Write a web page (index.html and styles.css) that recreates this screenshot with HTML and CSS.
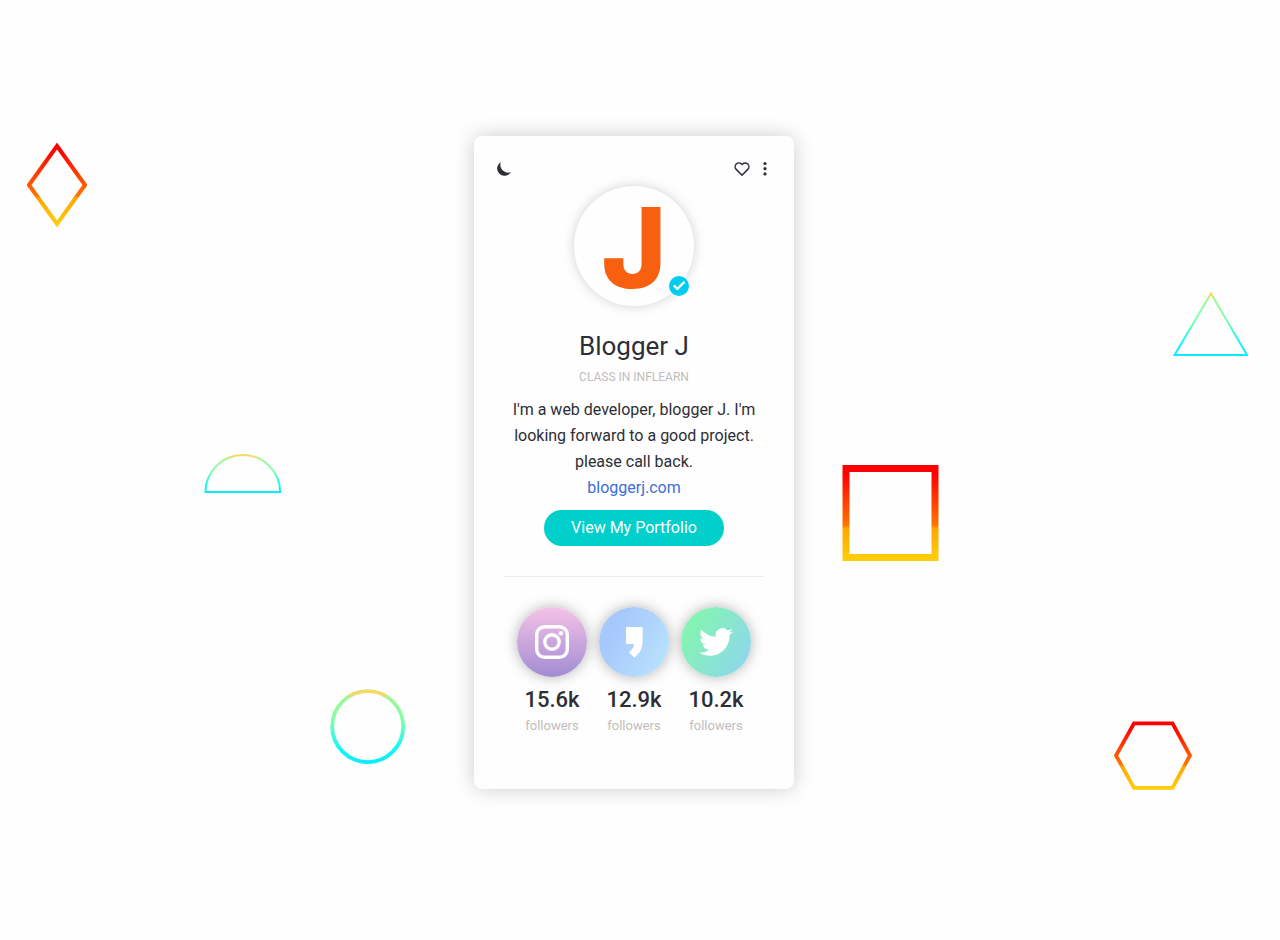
FILE: index.html
```html
<!DOCTYPE html>
<html lang="en">
<head>
<meta charset="utf-8">
<meta name="viewport" content="width=device-width, initial-scale=1">
<title>Blogger J</title>
<link rel="stylesheet" href="styles.css">
</head>
<body>
<svg class="defs" aria-hidden="true">
  <defs>
    <linearGradient id="warm" x1="0" y1="0" x2="0" y2="1">
      <stop offset="0.06" stop-color="#ff0000"/>
      <stop offset="0.64" stop-color="#ff7600"/>
      <stop offset="0.67" stop-color="#ffa600"/>
      <stop offset="1" stop-color="#ffcc0a"/>
    </linearGradient>
    <linearGradient id="cool" x1="0" y1="0" x2="0" y2="1">
      <stop offset="0" stop-color="#f0da68"/>
      <stop offset="0.06" stop-color="#f0da68"/>
      <stop offset="0.08" stop-color="#a0f890"/>
      <stop offset="0.42" stop-color="#80ffaa"/>
      <stop offset="0.8" stop-color="#10f8f8"/>
      <stop offset="1" stop-color="#08eef8"/>
    </linearGradient>
  </defs>
</svg>
<div class="page">
  <div class="shapes" aria-hidden="true">
    <svg class="shape diamond" width="60" height="84" viewBox="0 0 60 84"><path d="M30 3 58 42 30 81 2 42Z" fill="none" stroke="url(#warm)" stroke-width="4"/></svg>
    <svg class="shape triangle" width="76" height="64" viewBox="0 0 76 64"><path d="M39 1.500 75 63H2.500Z" fill="none" stroke="url(#cool)" stroke-width="2"/></svg>
    <svg class="shape half" width="78" height="40" viewBox="0 0 78 40"><path d="M1.500 38a37.300 37 0 0 1 74.600 0Z" fill="none" stroke="url(#cool)" stroke-width="1.900"/></svg>
    <svg class="shape square" width="97" height="96" viewBox="0 0 97 96"><path d="M4 3.500h89v89H4Z" fill="none" stroke="url(#warm)" stroke-width="7"/></svg>
    <svg class="shape ring" width="76" height="76" viewBox="0 0 76 76"><circle cx="37.700" cy="37.600" r="35.500" fill="none" stroke="url(#cool)" stroke-width="3.800"/></svg>
    <svg class="shape hexagon" width="78" height="70" viewBox="0 0 78 70"><path d="M20 3.300H58.500L76 35.500 58.500 67.800H20L2 35.500Z" fill="none" stroke="url(#warm)" stroke-width="3.800"/></svg>
  </div>
  <main class="card">
    <header class="toolbar">
      <button class="icon-button" type="button" aria-label="Dark mode">
        <svg width="18" height="18" viewBox="0 0 18 18"><path d="M7 2A7.300 7.300 0 1 0 16.800 12 7.600 7.600 0 0 1 7 2Z" fill="#2d2e36"/></svg>
      </button>
      <div class="tools">
        <button class="icon-button" type="button" aria-label="Like">
          <svg width="18" height="18" viewBox="0 0 24 24"><path d="M12 20.300 4.300 12.500A5 5 0 0 1 11.400 5.400L12 6l.6-.6a5 5 0 0 1 7.100 7.100Z" fill="none" stroke="#2d2e36" stroke-width="2"/></svg>
        </button>
        <button class="icon-button" type="button" aria-label="More">
          <svg width="18" height="18" viewBox="0 0 18 18" fill="#2d2e36"><circle cx="9" cy="3.500" r="1.600"/><circle cx="9" cy="8.700" r="1.600"/><circle cx="9" cy="13.900" r="1.600"/></svg>
        </button>
      </div>
    </header>
    <div class="avatar">
      <span class="letter">J</span>
      <svg class="verified" width="20" height="20" viewBox="0 0 20 20"><circle cx="10" cy="10" r="10" fill="#00ccee"/><path d="m4.800 9.400 3.500 3.500 7.200-7" fill="none" stroke="#fff" stroke-width="2.200"/></svg>
    </div>
    <h1 class="name">Blogger J</h1>
    <p class="role">CLASS IN INFLEARN</p>
    <p class="bio">I'm a web developer, blogger J. I'm looking forward to a good project. please call back.</p>
    <a class="site" href="#">bloggerj.com</a>
    <button class="portfolio" type="button">View My Portfolio</button>
    <ul class="socials">
      <li class="social">
        <a class="badge instagram" href="#" aria-label="Instagram"><svg width="36" height="36" viewBox="0 0 36 36" fill="none" stroke="#fff"><rect x="2.700" y="2.700" width="30.600" height="30.600" rx="8" stroke-width="3.400"/><circle cx="18" cy="18" r="7.200" stroke-width="3.400"/><circle cx="26.900" cy="9.200" r="2.200" fill="#fff" stroke="none"/></svg></a>
        <strong class="count">15.6k</strong>
        <span class="label">followers</span>
      </li>
      <li class="social">
        <a class="badge story" href="#" aria-label="Story"><svg width="36" height="36" viewBox="0 0 36 36"><path d="M11 3H25.500Q26.700 3 26.700 4.200V16C26.700 24 23.500 30 18.400 33.400L12.800 28.200C16 26 17.800 23.500 18 20H11Q10 20 10 19V4Q10 3 11 3Z" fill="#fff"/></svg></a>
        <strong class="count">12.9k</strong>
        <span class="label">followers</span>
      </li>
      <li class="social">
        <a class="badge twitter" href="#" aria-label="Twitter"><svg width="34" height="34" viewBox="0 0 24 24"><path d="M23.953 4.570a10 10 0 01-2.825.775 4.958 4.958 0 002.163-2.723c-.951.555-2.005.959-3.127 1.184a4.920 4.920 0 00-8.384 4.482C7.690 8.095 4.067 6.130 1.640 3.162a4.822 4.822 0 00-.666 2.475c0 1.710.870 3.213 2.188 4.096a4.904 4.904 0 01-2.228-.616v.060a4.923 4.923 0 003.946 4.827 4.996 4.996 0 01-2.212.085 4.936 4.936 0 004.604 3.417 9.867 9.867 0 01-6.102 2.105c-.390 0-.779-.023-1.170-.067a13.995 13.995 0 007.557 2.209c9.053 0 13.998-7.496 13.998-13.985 0-.210 0-.420-.015-.630A9.935 9.935 0 0024 4.590z" fill="#fff"/></svg></a>
        <strong class="count">10.2k</strong>
        <span class="label">followers</span>
      </li>
    </ul>
  </main>
</div>
</body>
</html>
```
FILE: styles.css
```css
* { box-sizing: border-box; }

body {
  margin: 0;
  background: #fefefe;
  color: #2d2e36;
  font-family: Roboto, sans-serif;
}

.defs { position: absolute; width: 0; height: 0; }

.page {
  position: relative;
  min-height: 100vh;
  padding: 0 12px 15px 0;
  display: grid;
  place-items: center;
  overflow: hidden;
}

.shapes { position: absolute; inset: 0; }
.shape { position: absolute; }
.diamond { left: 27px; top: 143px; }
.triangle { left: 1172px; top: 292px; }
.half { left: 204px; top: 454px; }
.square { left: 842px; top: 465px; }
.ring { left: 330px; top: 689px; }
.hexagon { left: 1114px; top: 720px; }

.card {
  position: relative;
  width: 100%;
  max-width: 320px;
  padding: 24px 20px 55px;
  display: flex;
  flex-direction: column;
  align-items: center;
  border-radius: 8px;
  background: #fefefe;
  box-shadow: 0 0 20px rgba(0, 0, 0, 0.2);
  text-align: center;
}

.toolbar {
  width: 100%;
  display: flex;
  justify-content: space-between;
}

.tools { display: flex; gap: 5px; }

.icon-button {
  padding: 0;
  border: 0;
  background: none;
  cursor: pointer;
}
.icon-button svg { display: block; }

.avatar {
  position: relative;
  width: 120px;
  height: 120px;
  margin-top: 8px;
  display: grid;
  place-items: center;
  border-radius: 50%;
  box-shadow: 0 0 12px rgba(0, 0, 0, 0.18);
}

.letter {
  color: #f6600e;
  font: 800 111px/124px Inter, sans-serif;
}

.verified { position: absolute; right: 5px; bottom: 10px; }

.name {
  margin: 24px 0 0;
  font-size: 26px;
  font-weight: 400;
  line-height: 32px;
}

.role {
  margin: 7px 0 0;
  color: #c1bdbd;
  font-size: 12px;
  line-height: 16px;
}

.bio {
  margin: 12px 0 0;
  padding: 0 12px;
  font-size: 16px;
  line-height: 26px;
}

.site {
  color: #3a6fd8;
  font-size: 16px;
  line-height: 26px;
  text-decoration: none;
}

.portfolio {
  width: 180px;
  height: 36px;
  margin-top: 9px;
  padding: 0;
  border: 0;
  border-radius: 18px;
  background: #00cfcc;
  color: #fff;
  font: 400 16px/20px Roboto, sans-serif;
  cursor: pointer;
}

.socials {
  width: 260px;
  margin: 30px 0 0;
  padding: 30px 0 0;
  display: flex;
  justify-content: center;
  gap: 12px;
  border-top: 1px solid #ececec;
  list-style: none;
}

.social {
  width: 70px;
  display: flex;
  flex-direction: column;
  align-items: center;
}

.badge {
  width: 70px;
  height: 70px;
  display: grid;
  place-items: center;
  border-radius: 50%;
  box-shadow: 0 0 14px rgba(0, 0, 0, 0.3);
}
.instagram { background: linear-gradient(#f6c2e8, #a18cd1); }
.story { background: linear-gradient(120deg, #a6c8fc 25%, #bce6fc); }
.twitter { background: linear-gradient(120deg, #84f3b4 20%, #8fd3f4); }

.count {
  margin-top: 10px;
  font-size: 22px;
  font-weight: 500;
  line-height: 26px;
}

.label {
  margin-top: 5px;
  color: #c1bdbd;
  font-size: 13px;
  line-height: 16px;
}
```
